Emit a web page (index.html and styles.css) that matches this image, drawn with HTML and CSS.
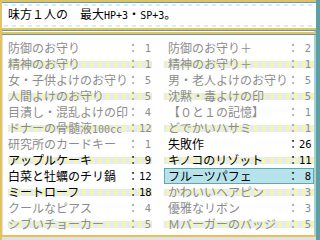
FILE: index.html
```html
<!DOCTYPE html>
<html lang="ja">
<head>
<meta charset="utf-8">
<link rel="stylesheet" href="styles.css">
</head>
<body>
<div class="screen">
  <div class="help">
    <p class="help-text">味方１人の　最大<span class="hw">HP+3</span>・<span class="hw">SP+3</span>。</p>
  </div>
  <div class="list">
    <div class="item off"><span class="name">防御のお守り</span><span class="colon">：</span><span class="num">1</span></div>
    <div class="item off"><span class="name">防御のお守り＋</span><span class="colon">：</span><span class="num">2</span></div>
    <div class="item off"><span class="name">精神のお守り</span><span class="colon">：</span><span class="num">1</span></div>
    <div class="item off"><span class="name">精神のお守り＋</span><span class="colon">：</span><span class="num">1</span></div>
    <div class="item off"><span class="name">女・子供よけのお守り</span><span class="colon">：</span><span class="num">5</span></div>
    <div class="item off"><span class="name">男・老人よけのお守り</span><span class="colon">：</span><span class="num">5</span></div>
    <div class="item off"><span class="name">人間よけのお守り</span><span class="colon">：</span><span class="num">5</span></div>
    <div class="item off"><span class="name">沈黙・毒よけの印</span><span class="colon">：</span><span class="num">5</span></div>
    <div class="item off"><span class="name">目潰し・混乱よけの印</span><span class="colon">：</span><span class="num">4</span></div>
    <div class="item off"><span class="name">【０と１の記憶】</span><span class="colon">：</span><span class="num">1</span></div>
    <div class="item off"><span class="name">ドナーの骨髄液<span class="hw">100cc</span></span><span class="colon">：</span><span class="num">12</span></div>
    <div class="item off"><span class="name">どでかいハサミ</span><span class="colon">：</span><span class="num">1</span></div>
    <div class="item off"><span class="name">研究所のカードキー</span><span class="colon">：</span><span class="num">1</span></div>
    <div class="item"><span class="name">失敗作</span><span class="colon">：</span><span class="num">26</span></div>
    <div class="item"><span class="name">アップルケーキ</span><span class="colon">：</span><span class="num">9</span></div>
    <div class="item"><span class="name">キノコのリゾット</span><span class="colon">：</span><span class="num">11</span></div>
    <div class="item"><span class="name">白菜と牡蠣のチリ鍋</span><span class="colon">：</span><span class="num">12</span></div>
    <div class="item selected"><span class="name">フルーツパフェ</span><span class="colon">：</span><span class="num">8</span></div>
    <div class="item"><span class="name">ミートローフ</span><span class="colon">：</span><span class="num">18</span></div>
    <div class="item off"><span class="name">かわいいヘアピン</span><span class="colon">：</span><span class="num">3</span></div>
    <div class="item off"><span class="name">クールなピアス</span><span class="colon">：</span><span class="num">4</span></div>
    <div class="item off"><span class="name">優雅なリボン</span><span class="colon">：</span><span class="num">3</span></div>
    <div class="item off"><span class="name">シブいチョーカー</span><span class="colon">：</span><span class="num">5</span></div>
    <div class="item off"><span class="name">Ｍバーガーのバッジ</span><span class="colon">：</span><span class="num">5</span></div>
  </div>
</div>
</body>
</html>
```
FILE: styles.css
```css
html, body {
  margin: 0;
  padding: 0;
  background: #ffffff;
}

body {
  width: 320px;
  height: 240px;
  overflow: hidden;
  font-family: "Noto Sans CJK JP", "Noto Sans", sans-serif;
  font-size: 12px;
  color: #000;
}

.screen {
  box-sizing: border-box;
  width: 320px;
  height: 240px;
  display: flex;
  flex-direction: column;
  border-left: 2px solid #e6c25a;
  border-right: 4px solid #5f9ea3;
  box-shadow: inset 1px 0 0 #f3e3a8, inset -2px 0 0 #a9d0d3;
}

.help {
  box-sizing: border-box;
  height: 31px;
  flex: none;
  box-shadow:
    inset 0 2px 0 #e6c25a,
    inset 0 3px 0 #5f9ea3,
    inset 0 -1px 0 #5f9ea3,
    inset 0 -3px 0 #e6c25a;
  background:
    radial-gradient(ellipse 3px 1px at 50% 50%, #d6eef7 80%, transparent 100%) 0 4px / 8px 2px repeat-x,
    radial-gradient(ellipse 3px 1px at 50% 50%, #d6eef7 80%, transparent 100%) 0 25px / 8px 2px repeat-x,
    #fff;
}

.help-text {
  margin: 0;
  padding: 6px 0 0 6px;
  line-height: 16px;
  white-space: nowrap;
}

.hw {
  font-family: "DejaVu Sans Mono", "Liberation Mono", monospace;
  font-size: 10px;
  line-height: 10px;
}

.list {
  flex: 1;
  margin-top: 1px;
  padding: 8px 0 0 6px;
  display: grid;
  grid-template-columns: 144px 150px;
  grid-auto-rows: 16px;
  column-gap: 12px;
  align-content: start;
  box-shadow:
    inset 0 2px 0 #e6c25a,
    inset 0 3px 0 #5f9ea3,
    inset 0 -3px 0 #e2e2e2,
    inset 0 -5px 0 #e6c25a;
}

.item {
  box-sizing: border-box;
  display: flex;
  align-items: center;
  height: 16px;
  line-height: 14px;
  white-space: nowrap;
  padding-right: 1px;
}

.item:nth-child(2n) {
  padding-left: 4px;
  padding-right: 3px;
}

.item:nth-child(4n+3),
.item:nth-child(4n+4) {
  background:
    radial-gradient(ellipse 3px 4px at 50% 50%, #fbf0b8 75%, transparent 100%) 0 4px / 8px 9px repeat-x,
    linear-gradient(#d9eff7, #d9eff7) 0 5px / 100% 7px no-repeat;
}

.name {
  flex: 1;
  min-width: 0;
}

.colon {
  width: 12px;
  text-align: center;
  flex: none;
}

.num {
  width: 12px;
  flex: none;
  text-align: right;
  font-family: "DejaVu Sans Mono", "Liberation Mono", monospace;
  font-size: 10.5px;
}

.off {
  color: #8c8c8c;
}

.selected {
  background: #b6e3eb;
  box-shadow: inset 0 0 0 1px #62a7b0;
}
```
